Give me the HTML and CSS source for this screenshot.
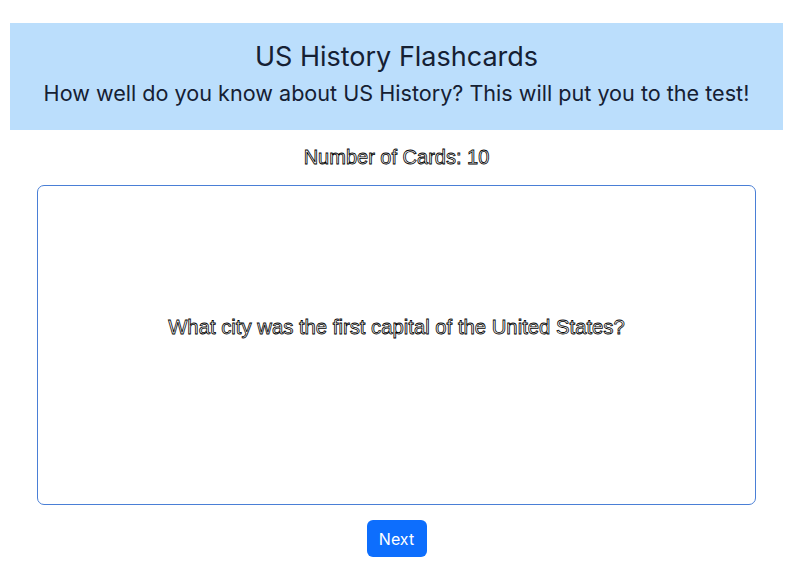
FILE: index.html
```html
<!DOCTYPE html>
<html>
<head>
<meta charset="utf-8">
<link rel="stylesheet" href="styles.css">
</head>
<body>
<div class="page">
  <header class="hero">
    <h1 class="title">US History Flashcards</h1>
    <p class="subtitle">How well do you know about US History? This will put you to the test!</p>
  </header>
  <div class="count">Number of Cards: 10</div>
  <div class="card">
    <p class="question">What city was the first capital of the United States?</p>
  </div>
  <div class="actions">
    <button class="next">Next</button>
  </div>
</div>
</body>
</html>
```
FILE: styles.css
```css
html, body {
  margin: 0;
  padding: 0;
  background: #fff;
}
body {
  font-family: Inter, "Noto Sans", "Liberation Sans", sans-serif;
}
.page {
  padding: 23px 17px 0 10px;
}
.hero {
  background: #bbdefc;
  height: 107px;
  box-sizing: border-box;
  padding-top: 18px;
  display: flex;
  flex-direction: column;
  align-items: center;
  color: #152033;
}
.title {
  margin: 0;
  font-size: 27px;
  font-weight: 400;
  line-height: 32px;
}
.subtitle {
  margin: 6px 0 0;
  font-size: 21.6px;
  line-height: 28px;
}
.count {
  text-align: center;
  font-family: "Liberation Sans", Arial, sans-serif;
  font-size: 20px;
  line-height: 24px;
  margin-top: 15px;
  color: #fff;
  -webkit-text-stroke: 0.8px #000;
}
.card {
  margin: 16px 27px 0;
  height: 318px;
  box-sizing: content-box;
  border: 1px solid #4a7fd6;
  border-radius: 7px;
  display: flex;
  align-items: center;
  justify-content: center;
}
.question {
  margin: 0 0 36px;
  font-family: "Liberation Sans", Arial, sans-serif;
  font-size: 20.3px;
  color: #fff;
  -webkit-text-stroke: 0.8px #000;
}
.actions {
  display: flex;
  justify-content: center;
  margin-top: 15px;
}
.next {
  background: #0d6efd;
  color: #fff;
  border: none;
  border-radius: 6px;
  font-family: inherit;
  font-size: 16px;
  width: 60px;
  height: 37px;
  padding: 0;
}
```
